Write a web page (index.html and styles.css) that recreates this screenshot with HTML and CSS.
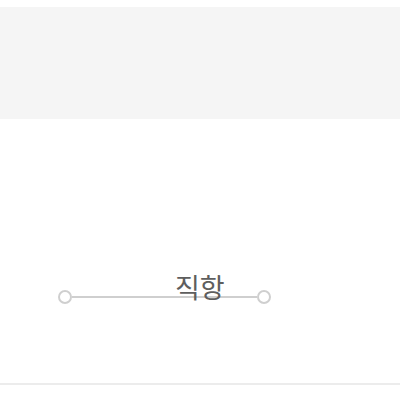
FILE: index.html
```html
<!DOCTYPE html>
<html lang="ko">
<head>
    <meta charset="UTF-8">
    <meta name="viewport" content="width=device-width, initial-scale=1.0">
    <title>직항</title>
    <link rel="stylesheet" href="styles.css">
</head>
<body>
    <div class="page">
        <div class="banner"></div>
        <div class="route-area">
            <div class="route">
                <span class="dot"></span>
                <span class="line"></span>
                <span class="dot"></span>
                <span class="route-label">직항</span>
            </div>
        </div>
        <div class="divider"></div>
    </div>
</body>
</html>
```

FILE: styles.css
```css
body {
    margin: 0;
    padding: 0;
    background-color: #fff;
    font-family: "Noto Sans CJK KR", "Noto Sans", sans-serif;
}
.page {
    padding-top: 7px;
}
.banner {
    height: 112px;
    background-color: #f5f5f5;
}
.route-area {
    height: 264px;
    padding-left: 58px;
    display: flex;
    align-items: flex-start;
}
.route {
    position: relative;
    margin-top: 171px;
    display: flex;
    align-items: center;
}
.dot {
    width: 10px;
    height: 10px;
    border: 2px solid #cfcfcf;
    border-radius: 50%;
    background-color: #fff;
}
.line {
    width: 185px;
    height: 2px;
    background-color: #cfcfcf;
}
.route-label {
    position: absolute;
    left: 117px;
    top: -20px;
    font-size: 27px;
    line-height: 34px;
    color: #5e5e5e;
}
.divider {
    height: 2px;
    background-color: #ececec;
}
```
